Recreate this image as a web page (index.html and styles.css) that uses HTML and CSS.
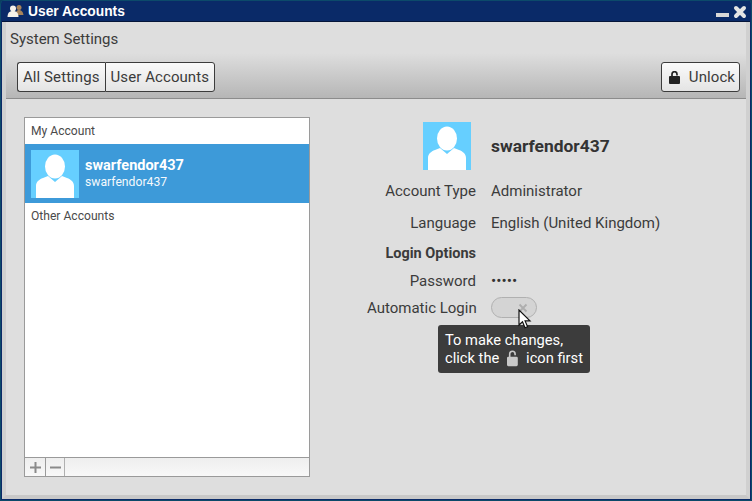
FILE: index.html
```html
<!DOCTYPE html>
<html lang="en">
<head>
<meta charset="utf-8">
<title>User Accounts</title>
<link rel="stylesheet" href="styles.css">
</head>
<body>
<div class="window">
  <header class="titlebar">
    <svg class="app-icon" width="17" height="14" viewBox="0 0 16 14"><circle cx="11.500" cy="3.500" r="2.500" fill="#a8845a"/><path d="M8 11c0-4 2-5 3.500-5s4 1 4.500 5z" fill="#a8845a"/><circle cx="5.500" cy="4.500" r="3" fill="#f6f2ea"/><path d="M0 13c0-4.500 2.500-6 5.500-6s5.500 1.500 5.500 6z" fill="#f6f2ea"/></svg>
    <span class="title">User Accounts</span>
    <span class="spacer"></span>
    <span class="win-min"></span>
    <svg class="win-close" width="14" height="14" viewBox="0 0 14 14"><path d="M3 3l8 8M11 3l-8 8" stroke="#e4e4e4" stroke-width="4" stroke-linecap="round"/></svg>
  </header>
  <div class="client">
    <div class="app-title">System Settings</div>
    <div class="toolbar">
      <div class="crumbs">
        <button class="btn crumb-first">All Settings</button><button class="btn crumb-last">User Accounts</button>
      </div>
      <button class="btn unlock">
        <svg width="11" height="13" viewBox="0 0 11 13"><path d="M3 6V3.200a2.500 2.500 0 0 1 5 0V4.500" fill="none" stroke="#222" stroke-width="1.700"/><rect x="0" y="5" width="11" height="8" rx="1" fill="#222"/></svg>
        <span>Unlock</span>
      </button>
    </div>
    <main class="panel">
      <section class="accounts">
        <div class="list">
          <div class="list-head">My Account</div>
          <div class="row-selected">
            <svg class="avatar" viewBox="0 0 48 48"><rect width="48" height="48" fill="#66cfff"/><path d="M5 48V36c0-4 3-6.500 7-8l5-2 7 6 7-6 5 2c4 1.500 7 4 7 8v12z" fill="#fff"/><ellipse cx="24" cy="16.500" rx="10" ry="12" fill="#fff"/></svg>
            <div class="row-text">
              <div class="row-name">swarfendor437</div>
              <div class="row-sub">swarfendor437</div>
            </div>
          </div>
          <div class="list-head">Other Accounts</div>
        </div>
        <div class="list-tools">
          <span class="tool"><svg width="11" height="11" viewBox="0 0 11 11"><path d="M5.500 0v11M0 5.500h11" stroke="#8a8a8a" stroke-width="2"/></svg></span>
          <span class="tool tool-minus"><svg width="11" height="11" viewBox="0 0 11 11"><path d="M0 5.500h11" stroke="#8a8a8a" stroke-width="2"/></svg></span>
        </div>
      </section>
      <section class="details">
        <div class="profile">
          <svg class="avatar" viewBox="0 0 48 48"><rect width="48" height="48" fill="#66cfff"/><path d="M5 48V36c0-4 3-6.500 7-8l5-2 7 6 7-6 5 2c4 1.500 7 4 7 8v12z" fill="#fff"/><ellipse cx="24" cy="16.500" rx="10" ry="12" fill="#fff"/></svg>
          <div class="profile-name">swarfendor437</div>
        </div>
        <div class="form">
          <div class="label r-type">Account Type</div><div class="value r-type">Administrator</div>
          <div class="label r-lang">Language</div><div class="value r-lang">English (United Kingdom)</div>
          <div class="label strong r-opts">Login Options</div><div class="r-opts"></div>
          <div class="label r-pass">Password</div><div class="value dots r-pass">•••••</div>
          <div class="label r-auto">Automatic Login</div>
          <div class="r-auto switch-cell">
            <div class="switch">
              <svg class="switch-x" width="10" height="10" viewBox="0 0 10 10"><path d="M1.500 1.500l7 7M8.500 1.500l-7 7" stroke="#aeaeae" stroke-width="1.800"/></svg>
            </div>
            <div class="tooltip">
              <div>To make changes,</div>
              <div class="tip-line">click the
                <svg width="12" height="17" viewBox="0 0 12 17"><path d="M3 7V3.500a3 3 0 0 1 6 0V5" fill="none" stroke="#c8c8c8" stroke-width="1.800"/><rect x="0" y="6.500" width="12" height="10.500" rx="1.500" fill="#c8c8c8"/></svg>
                icon first</div>
            </div>
            <svg class="cursor" width="14" height="21" viewBox="0 0 14 21"><path d="M1 1v15l3.500-3.300 2.500 6 2.600-1-2.500-5.800H12z" fill="#fff" stroke="#111" stroke-width="1.200"/></svg>
          </div>
        </div>
      </section>
    </main>
  </div>
</div>
</body>
</html>
```

FILE: styles.css
```css
* { box-sizing: border-box; }
html, body { margin: 0; height: 100%; }
body { font-family: Roboto, sans-serif; font-size: 15px; color: #3b3b3b; background: #0c3f60; }
.window { width: 752px; height: 501px; display: flex; flex-direction: column; background: #0a2a68; border: 1px solid #0c4a6a; border-radius: 4px 4px 0 0; padding: 0 1px 1px 1px; }
.titlebar { height: 21px; flex: none; display: flex; align-items: center; color: #fff; background: #0a2a68; border-bottom: 1px solid #05153a; padding: 0 3px 0 5px; }
.app-icon { margin-right: 4px; }
.title { font-family: "Liberation Sans", sans-serif; font-weight: 700; font-size: 13.800px; }
.spacer { flex: 1; }
.win-min { width: 13px; height: 4px; background: #d8d8d8; margin-top: 7px; }
.win-close { margin-left: 4px; margin-top: 2px; }
.client { flex: 1; display: flex; flex-direction: column; background: #dedede; border-left: 4px solid #d0d0d0; border-right: 4px solid #d0d0d0; border-bottom: 4px solid #c8c8c8; min-height: 0; }
.app-title { height: 31px; padding: 8px 4px 0; font-size: 15px; line-height: 18px; color: #3b3b3b; }
.toolbar { height: 46px; display: flex; justify-content: space-between; align-items: flex-start; padding: 9px 6px 0 11px; background: linear-gradient(#dedede, #b6b6b6); border-bottom: 1px solid #8c8c8c; }
.btn { font-family: Roboto, sans-serif; font-size: 15px; letter-spacing: .08px; color: #3b3b3b; height: 30px; padding: 0 5px; border: 1px solid #3c3c3c; background: linear-gradient(#fafafa, #e4e4e4); border-radius: 3px; }
.crumbs { display: flex; }
.crumb-first { border-radius: 3px 0 0 3px; border-right: 0; }
.crumb-last { border-radius: 0 3px 3px 0; }
.unlock { display: flex; align-items: center; gap: 9px; padding: 0 4px 0 7px; }
.panel { flex: 1; display: flex; min-height: 0; padding: 18px 0 18px 18px; }
.accounts { width: 286px; flex: none; display: flex; flex-direction: column; border: 1px solid #9a9a9a; }
.list { flex: 1; background: #fff; }
.list-head { font-size: 12.100px; height: 26px; line-height: 26px; padding-left: 6px; color: #4a4a4a; }
.row-selected { height: 59px; display: flex; align-items: center; gap: 6px; padding-left: 6px; background: #3d9ad9; color: #fff; }
.avatar { width: 48px; height: 48px; flex: none; }
.row-name { font-weight: 700; font-size: 14.500px; line-height: 18px; }
.row-sub { font-size: 12.200px; line-height: 15px; opacity: .95; }
.list-tools { height: 19px; flex: none; display: flex; border-top: 1px solid #9a9a9a; background: linear-gradient(#eeeeee, #f8f8f8); }
.tool { width: 21px; display: flex; align-items: center; justify-content: center; border-right: 1px solid #9a9a9a; }
.tool-minus { width: 19px; border-right-color: #b0b0b0; }
.details { flex: 1; position: relative; padding: 5px 0 0 113px; }
.profile { display: flex; align-items: center; gap: 20px; }
.profile-name { font-weight: 700; font-size: 17.400px; color: #333; }
.form { display: grid; grid-template-columns: 109px auto; column-gap: 15px; justify-content: start; margin-left: -56px; }
.label { text-align: right; white-space: nowrap; }
.strong { font-weight: 700; font-size: 14.500px; }
.r-type { margin-top: 12px; line-height: 18px; }
.r-lang { margin-top: 14px; line-height: 18px; }
.r-opts { margin-top: 13px; line-height: 18px; }
.r-pass { margin-top: 9px; line-height: 18px; }
.r-auto { margin-top: 9px; line-height: 18px; }
.dots { font-size: 15.500px; color: #333; }
.switch-cell { position: relative; height: 18px; }
.switch { width: 46px; height: 21px; margin-top: -2px; border-radius: 11px; border: 1px solid #b0b0b0; background: #d4d4d4; position: relative; }
.switch-x { position: absolute; right: 8px; top: 5px; }
.tooltip { position: absolute; left: -53px; top: 26px; width: 152px; height: 48px; background: #3c3c3c; color: #fff; border-radius: 3px; padding: 6px 7px; font-size: 14.700px; line-height: 18px; white-space: nowrap; }
.tip-line { display: flex; align-items: center; gap: 8px; }
.cursor { position: absolute; left: 27px; top: 10px; }
```
